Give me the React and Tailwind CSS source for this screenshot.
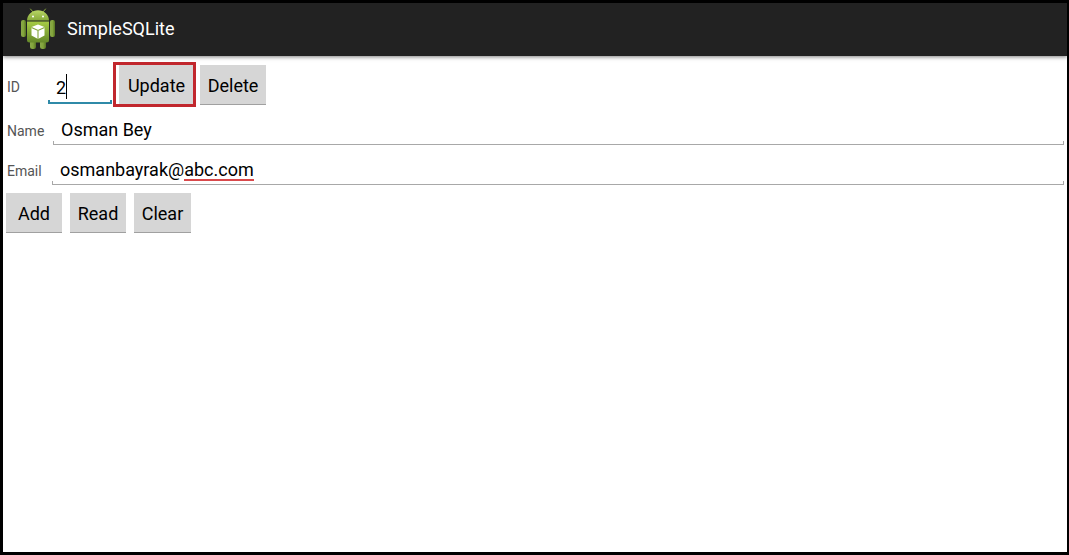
import React, { useState } from 'react'
import clsx from 'clsx'


const AndroidIcon = () => (
  <svg className="w-9 h-[42px] shrink-0" viewBox="0 0 36 42" aria-hidden="true">
    <defs>
      <linearGradient id="droid" x1="0" y1="0" x2="0" y2="1">
        <stop offset="0" stopColor="#a6cb45" />
        <stop offset="1" stopColor="#66892a" />
      </linearGradient>
      <linearGradient id="head" x1="0" y1="0" x2="0" y2="1">
        <stop offset="0" stopColor="#b9d765" />
        <stop offset="1" stopColor="#86a93a" />
      </linearGradient>
      <linearGradient id="limb" x1="0" y1="0" x2="1" y2="0">
        <stop offset="0" stopColor="#8aa94a" />
        <stop offset="0.5" stopColor="#83a53b" />
        <stop offset="1" stopColor="#557323" />
      </linearGradient>
    </defs>
    <path d="M13 4 L10.5 1 M23 4 L25.5 1" stroke="#8aa83e" strokeWidth="1" strokeLinecap="round" />
    <rect x="1" y="12" width="5" height="17" rx="2" fill="url(#limb)" />
    <rect x="30" y="12" width="5" height="17" rx="2" fill="url(#limb)" />
    <rect x="10" y="31" width="6" height="10" rx="2.5" fill="url(#limb)" />
    <rect x="20" y="31" width="6" height="10" rx="2.5" fill="url(#limb)" />
    <path d="M7 12.5 C7 6.5 12 2.2 18 2.2 C24 2.2 29 6.5 29 12.5 Z" fill="url(#head)" />
    <path d="M7 13.5 H29 V32 Q29 34.5 26.5 34.5 H9.5 Q7 34.5 7 32 Z" fill="url(#droid)" />
    <circle cx="13" cy="8.5" r="1" fill="#fff" />
    <circle cx="23" cy="8.5" r="1" fill="#fff" />
    <path d="M18 16.5 L24.5 19 V27.5 L18 31 L11.5 27.5 V19 Z" fill="#fff" />
    <path d="M11.5 19.5 L18 22.5 L24.5 19.5 M18 22.5 V31" fill="none" stroke="#84a53c" strokeWidth="1.1" />
  </svg>
)


const Button = ({ className, children, ...rest }) => (
  <button
    type="button"
    className={clsx('h-10 shrink-0 pt-0.5 bg-[#d6d6d6] border-b border-[#a0a0a0] text-lg text-black', className)}
    {...rest}
  >
    {children}
  </button>
)


// text box with the holo bracket under it
const Field = ({ id, label, labelClass, className, active, value, onChange, children }) => (
  <>
    <label htmlFor={id} className={clsx('shrink-0 pl-1 text-sm text-[#555]', labelClass)}>{label}</label>
    <div className={clsx('relative', className)}>
      <input
        id={id}
        type="text"
        value={value}
        onChange={e => onChange(e.target.value)}
        className="block w-full h-full px-2 text-lg text-black bg-transparent outline-none"
        spellCheck={false}
      />
      <span
        className={clsx(
          'absolute inset-x-0 bottom-0 h-1 pointer-events-none',
          active ? 'border-x-2 border-b-2 border-[#2f8aa8]' : 'border-x border-b border-[#a8a8a8]'
        )}
      />
      {children}
    </div>
  </>
)


const App = () => {
  const [id, setId] = useState('2')
  const [name, setName] = useState('Osman Bey')
  const [email, setEmail] = useState('osmanbayrak@abc.com')

  const at = email.indexOf('@') + 1

  const clear = () => {
    setId('')
    setName('')
    setEmail('')
  }

  return (
    <div className="min-h-screen flex flex-col bg-white border-[3px] border-r-2 border-black font-[Roboto,sans-serif]">
      <header className="flex items-center gap-[11px] h-[53px] pl-[17px] pb-0.5 bg-[#222] shadow-[0_1px_4px_rgba(0,0,0,0.5)]">
        <AndroidIcon />
        <h1 className="text-lg text-white">SimpleSQLite</h1>
      </header>

      <main className="flex flex-col pt-[9px] pr-[3px]">
        <div className="flex items-center h-10">
          <Field id="id" label="ID" labelClass="w-[45px] pt-1" className="w-16 h-[38px] pt-1" active value={id} onChange={setId}>
            <span className="absolute left-[18px] top-2 w-px h-[25px] bg-black" />
          </Field>
          <div className="relative ml-[7px]">
            <Button className="w-[75px]">Update</Button>
            <span className="absolute -left-[6px] -right-[2px] -top-[3px] -bottom-[2px] border-[3px] border-[#c1272d] pointer-events-none" />
          </div>
          <Button className="w-[66px] ml-[6px]">Delete</Button>
        </div>

        <div className="flex items-center h-10">
          <Field id="name" label="Name" labelClass="w-[50px] pt-3" className="flex-1 h-full pt-2" value={name} onChange={setName} />
        </div>

        <div className="flex items-center h-10">
          <Field id="email" label="Email" labelClass="w-[49px] pt-3" className="flex-1 h-full pt-2" value={email} onChange={setEmail}>
            <span className="absolute left-2 top-2 text-lg text-transparent whitespace-pre pointer-events-none" aria-hidden="true">
              {email.slice(0, at)}
              <span className="inline-block h-7 border-b-2 border-[#d9494c]">{email.slice(at)}</span>
            </span>
          </Field>
        </div>

        <div className="flex gap-2 mt-2 pl-[3px]">
          <Button className="w-14">Add</Button>
          <Button className="w-14">Read</Button>
          <Button className="w-[57px]" onClick={clear}>Clear</Button>
        </div>
      </main>
    </div>
  )
}

export default App
